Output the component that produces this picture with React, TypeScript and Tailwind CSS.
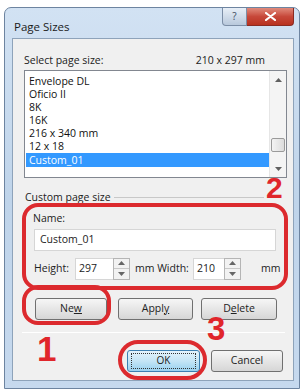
import React from "react";

const font = { fontFamily: '"Open Sans", "Noto Sans", sans-serif' };

function Btn({ label, w, cls = "" }: { label: React.ReactNode; w: string; cls?: string }) {
  return (
    <div
      className={`${w} h-[22px] flex items-center justify-center rounded-[3px] border border-[#707070] bg-gradient-to-b from-[#f6f6f6] via-[#e6e6e6] to-[#d6d6d6] text-[10.5px] text-[#222] ${cls}`}
    >
      {label}
    </div>
  );
}

function Spinner() {
  return (
    <div className="w-[17px] h-[22px] flex flex-col border border-[#b5b5b5] bg-[#f2f2f2]">
      <div className="flex-1 flex items-center justify-center border-b border-[#c8c8c8]">
        <svg width="7" height="4" viewBox="0 0 7 4"><path d="M0 4 L3.5 0 L7 4 Z" fill="#666" /></svg>
      </div>
      <div className="flex-1 flex items-center justify-center">
        <svg width="7" height="4" viewBox="0 0 7 4"><path d="M0 0 L3.5 4 L7 0 Z" fill="#666" /></svg>
      </div>
    </div>
  );
}

export default function App() {
  const items = ["Envelope DL", "Oficio II", "8K", "16K", "216 x 340 mm", "12 x 18"];
  return (
    <div className="relative w-[304px] h-[390px] bg-white overflow-hidden" style={font}>
      {/* window */}
      <div className="ml-[4px] mt-[7px] w-[296px] h-[382px] rounded-t-[7px] border border-[#6d84a0] bg-gradient-to-b from-[#d2e2f3] via-[#bfd4ea] to-[#c6d9ee] flex flex-col">
        {/* title bar */}
        <div className="h-[30px] flex items-start shrink-0">
          <div className="pl-[9px] pt-[10px] text-[11.5px] text-[#1a1a1a]">Page Sizes</div>
          <div className="ml-auto mr-[5px] flex">
            <div className="w-[25px] h-[18px] rounded-bl-[4px] border border-[#7c8ea6] border-t-0 bg-gradient-to-b from-[#e8eff7] to-[#b9c9dc] flex items-center justify-center text-[10px] text-[#3b4b60]">
              ?
            </div>
            <div className="w-[47px] h-[18px] rounded-br-[4px] border border-[#8a2b22] border-t-0 border-l-0 bg-gradient-to-b from-[#e08a7c] via-[#c7483a] to-[#b8321f] flex items-center justify-center">
              <svg width="11" height="9" viewBox="0 0 11 9">
                <path d="M1 1 L10 8 M10 1 L1 8" stroke="#fff" strokeWidth="2.2" strokeLinecap="round" />
              </svg>
            </div>
          </div>
        </div>
        {/* client */}
        <div className="ml-[7px] mr-[5px] h-[343px] border border-[#8ea3ba] bg-[#f0f0f0] pl-[11px] pr-[6px] pt-[15px] flex flex-col text-[#222]">
          <div className="h-[13px] flex items-center justify-between text-[10.5px] leading-none">
            <span>Select page size:</span>
            <span className="pr-[22px]">210 x 297 mm</span>
          </div>
          <div className="mt-[3px] h-[108px] border border-[#828790] bg-white flex">
            <div className="flex-1 pt-[4px] pl-[1px]">
              {items.map((t) => (
                <div key={t} className="h-[13px] leading-[13px] pl-[3px] text-[10.5px] text-[#111]">
                  {t}
                </div>
              ))}
              <div className="h-[14px] leading-[14px] pl-[3px] text-[10.5px] bg-[#3399ff] text-white">Custom_01</div>
            </div>
            <div className="w-[17px] bg-[#f4f4f4] border-l border-[#e6e6e6] flex flex-col items-center">
              <div className="h-[17px] flex items-center justify-center">
                <svg width="7" height="4" viewBox="0 0 7 4"><path d="M0 4 L3.5 0 L7 4 Z" fill="#606060" /></svg>
              </div>
              <div className="flex-1" />
              <div className="w-[14px] h-[14px] mb-[8px] rounded-[2px] border border-[#9a9a9a] bg-gradient-to-r from-[#f3f3f3] to-[#dcdcdc]" />
              <div className="h-[17px] flex items-center justify-center">
                <svg width="7" height="4" viewBox="0 0 7 4"><path d="M0 0 L3.5 4 L7 0 Z" fill="#606060" /></svg>
              </div>
            </div>
          </div>
          {/* group */}
          <div className="mt-[13px] h-[12px] flex items-center text-[10.5px] leading-none">
            <span className="pl-[1px]">Custom page size</span>
            <div className="ml-[3px] w-[150px] h-px bg-[#c8c8c8]" />
          </div>
          <div className="pl-[9px] pt-[10px] text-[10.5px] leading-none">Name:</div>
          <div className="ml-[10px] mr-[11px] mt-[5px] h-[22px] border border-[#d6d6d6] bg-white flex items-center pl-[5px] text-[10.5px]">
            Custom_01
          </div>
          <div className="mt-[7px] h-[22px] flex items-center text-[10.5px]">
            <span className="pl-[10px] w-[51px]">Height:</span>
            <div className="w-[38px] h-[22px] border border-[#d6d6d6] border-r-0 bg-white flex items-center pl-[3px]">297</div>
            <Spinner />
            <span className="pl-[5px] w-[63px]">mm Width:</span>
            <div className="w-[31px] h-[22px] border border-[#d6d6d6] border-r-0 bg-white flex items-center pl-[3px]">210</div>
            <Spinner />
            <span className="pl-[20px]">mm</span>
          </div>
          <div className="mt-[18px] flex">
            <Btn w="w-[72px] ml-[11px]" label={<span>Ne<u>w</u></span>} />
            <Btn w="w-[75px] ml-[11px]" label={<span>Appl<u>y</u></span>} />
            <Btn w="w-[76px] ml-[8px]" label={<span>D<u>e</u>lete</span>} />
          </div>
          <div className="mt-[12px] ml-[-2px] mr-[2px] h-px bg-[#c9c9c9] border-b border-white" />
          <div className="mt-[17px] flex">
            <div className="ml-[103px] w-[73px] h-[22px] rounded-[3px] border border-[#3c7fb1] bg-gradient-to-b from-[#e5f4fc] via-[#c4e5f6] to-[#98d1ef] flex items-center justify-center text-[10px] text-[#222]">
              <div className="w-[65px] h-[16px] border border-dotted border-[#333] flex items-center justify-center">OK</div>
            </div>
            <Btn w="w-[72px] ml-[11px]" label="Cancel" />
          </div>
        </div>
      </div>

      {/* annotations */}
      <div className="absolute left-[22px] top-[203px] w-[266px] h-[87px] rounded-[16px] border-[4px] border-[#dc2a2e]" />
      <div className="absolute left-[22px] top-[285px] w-[89px] h-[40px] rounded-[16px] border-[4px] border-[#dc2a2e]" />
      <div className="absolute left-[118px] top-[340px] w-[89px] h-[40px] rounded-full border-[4px] border-[#dc2a2e]" />
      <div
        className="absolute left-[266px] top-[173px] text-[30px] font-bold leading-none text-[#e0262b]"
        style={{ fontFamily: '"Liberation Sans", Arial, sans-serif' }}
      >
        2
      </div>
      <div
        className="absolute left-[37px] top-[331px] text-[35px] font-bold leading-none text-[#e0262b]"
        style={{ fontFamily: '"Liberation Sans", Arial, sans-serif' }}
      >
        1
      </div>
      <div
        className="absolute left-[207px] top-[312px] text-[33px] font-bold leading-none text-[#e0262b]"
        style={{ fontFamily: '"Liberation Sans", Arial, sans-serif' }}
      >
        3
      </div>
    </div>
  );
}
